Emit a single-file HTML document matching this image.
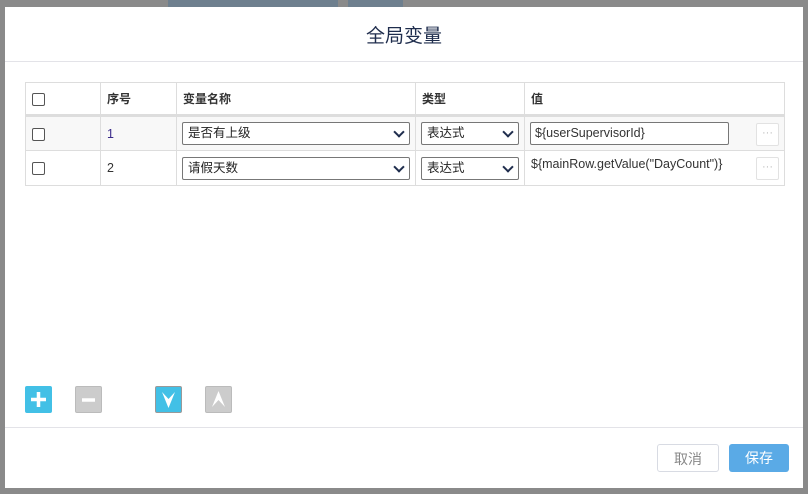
<!DOCTYPE html>
<html><head><meta charset="utf-8"><style>
*{box-sizing:border-box;margin:0;padding:0}
body{width:808px;height:494px;background:#8a8a8a;position:relative;overflow:hidden;font-family:"Liberation Sans","Noto Sans CJK SC",sans-serif;font-size:13px;color:#333}
.tb{position:absolute;top:0;height:7px;background:#6e7f8e}
.dlg{position:absolute;left:5px;top:7px;width:798px;height:481px;background:#fff}
.title{position:absolute;left:0;right:0;top:14px;text-align:center;font-size:19px;color:#1f2d4d}
.hl{position:absolute;left:0;right:0;height:1px;background:#e3e3e8}
table{position:absolute;left:20px;top:75px;border-collapse:collapse;width:760px}
td{border:1px solid #ddd;padding:0 6px;font-size:12.5px}
tr.h td{height:33px;font-weight:bold;color:#333;font-size:12px;padding-top:0}
tr.h{border-bottom:3px solid #ddd}
tr.r td{height:35px}
tr.g{background:#f8f8f8}
.cb{width:13px;height:13px;border:1px solid #555;border-radius:2px;background:#fff;display:inline-block;vertical-align:middle}
.sel{height:23px;border:1px solid #777;border-radius:2px;background:#fff;position:relative;padding:0 5px;line-height:21px;font-size:12.5px;color:#222}
.sel:after{content:"";position:absolute;right:6px;top:5px;width:6px;height:6px;border-right:2px solid #1f2d4d;border-bottom:2px solid #1f2d4d;transform:rotate(45deg)}
.inp{height:23px;border:1px solid #777;border-radius:2px;padding:0 4px;line-height:21px;width:199px;display:inline-block;background:#fff}
.dot{position:absolute;right:5px;width:23px;height:23px;border:1px solid #e2e2e2;border-radius:2px;color:#bbb;text-align:center;line-height:18px;font-size:11px;background:#fff}
.btn{position:absolute;top:379px;width:27px;height:27px;border-radius:2px}
.fb{position:absolute;top:437px;height:28px;border-radius:3px;font-size:14px;text-align:center;line-height:28px}
</style></head><body>
<div class="tb" style="left:168px;width:170px"></div>
<div class="tb" style="left:348px;width:55px"></div>
<div class="dlg">
<div class="title">全局变量</div>
<div class="hl" style="top:54px"></div>
<table>
<tr class="h"><td style="width:75px"><span class="cb"></span></td><td style="width:76px">序号</td><td style="width:239px">变量名称</td><td style="width:109px">类型</td><td>值</td></tr>
<tr class="r g"><td><span class="cb"></span></td><td style="color:#3a2a8a">1</td><td style="padding:0 5px"><div class="sel">是否有上级</div></td><td style="padding:0 5px"><div class="sel">表达式</div></td><td style="position:relative;padding:0 5px"><span class="inp">${userSupervisorId}</span><span class="dot" style="top:6px">···</span></td></tr>
<tr class="r"><td><span class="cb"></span></td><td>2</td><td style="padding:0 5px"><div class="sel">请假天数</div></td><td style="padding:0 5px"><div class="sel">表达式</div></td><td style="position:relative;vertical-align:top;padding-top:6px">${mainRow.getValue("DayCount")}<span class="dot" style="top:6px">···</span></td></tr>
</table>
<div class="btn" style="left:20px;background:#42c0e6"><svg width="27" height="27"><path d="M13.5 6v15M6 13.5h15" stroke="#fff" stroke-width="3.5"/></svg></div>
<div class="btn" style="left:70px;background:#ccc;border:1px solid #bbb"><svg width="25" height="25"><path d="M6 13h13" stroke="#fff" stroke-width="3.5"/></svg></div>
<div class="btn" style="left:150px;background:#42c0e6;border:1px solid #999"><svg width="25" height="25"><path d="M6 5L12.5 21L19 5L12.5 12Z" fill="#fff"/></svg></div>
<div class="btn" style="left:200px;background:#ccc;border:1px solid #bbb"><svg width="25" height="25"><path d="M6 20L12.5 4L19 20L12.5 13Z" fill="#fff"/></svg></div>
<div class="hl" style="top:420px"></div>
<div class="fb" style="left:652px;width:62px;border:1px solid #d8dbe3;color:#888;background:#fff">取消</div>
<div class="fb" style="left:724px;width:60px;background:#5aaae6;color:#fff">保存</div>
</div>
</body></html>
